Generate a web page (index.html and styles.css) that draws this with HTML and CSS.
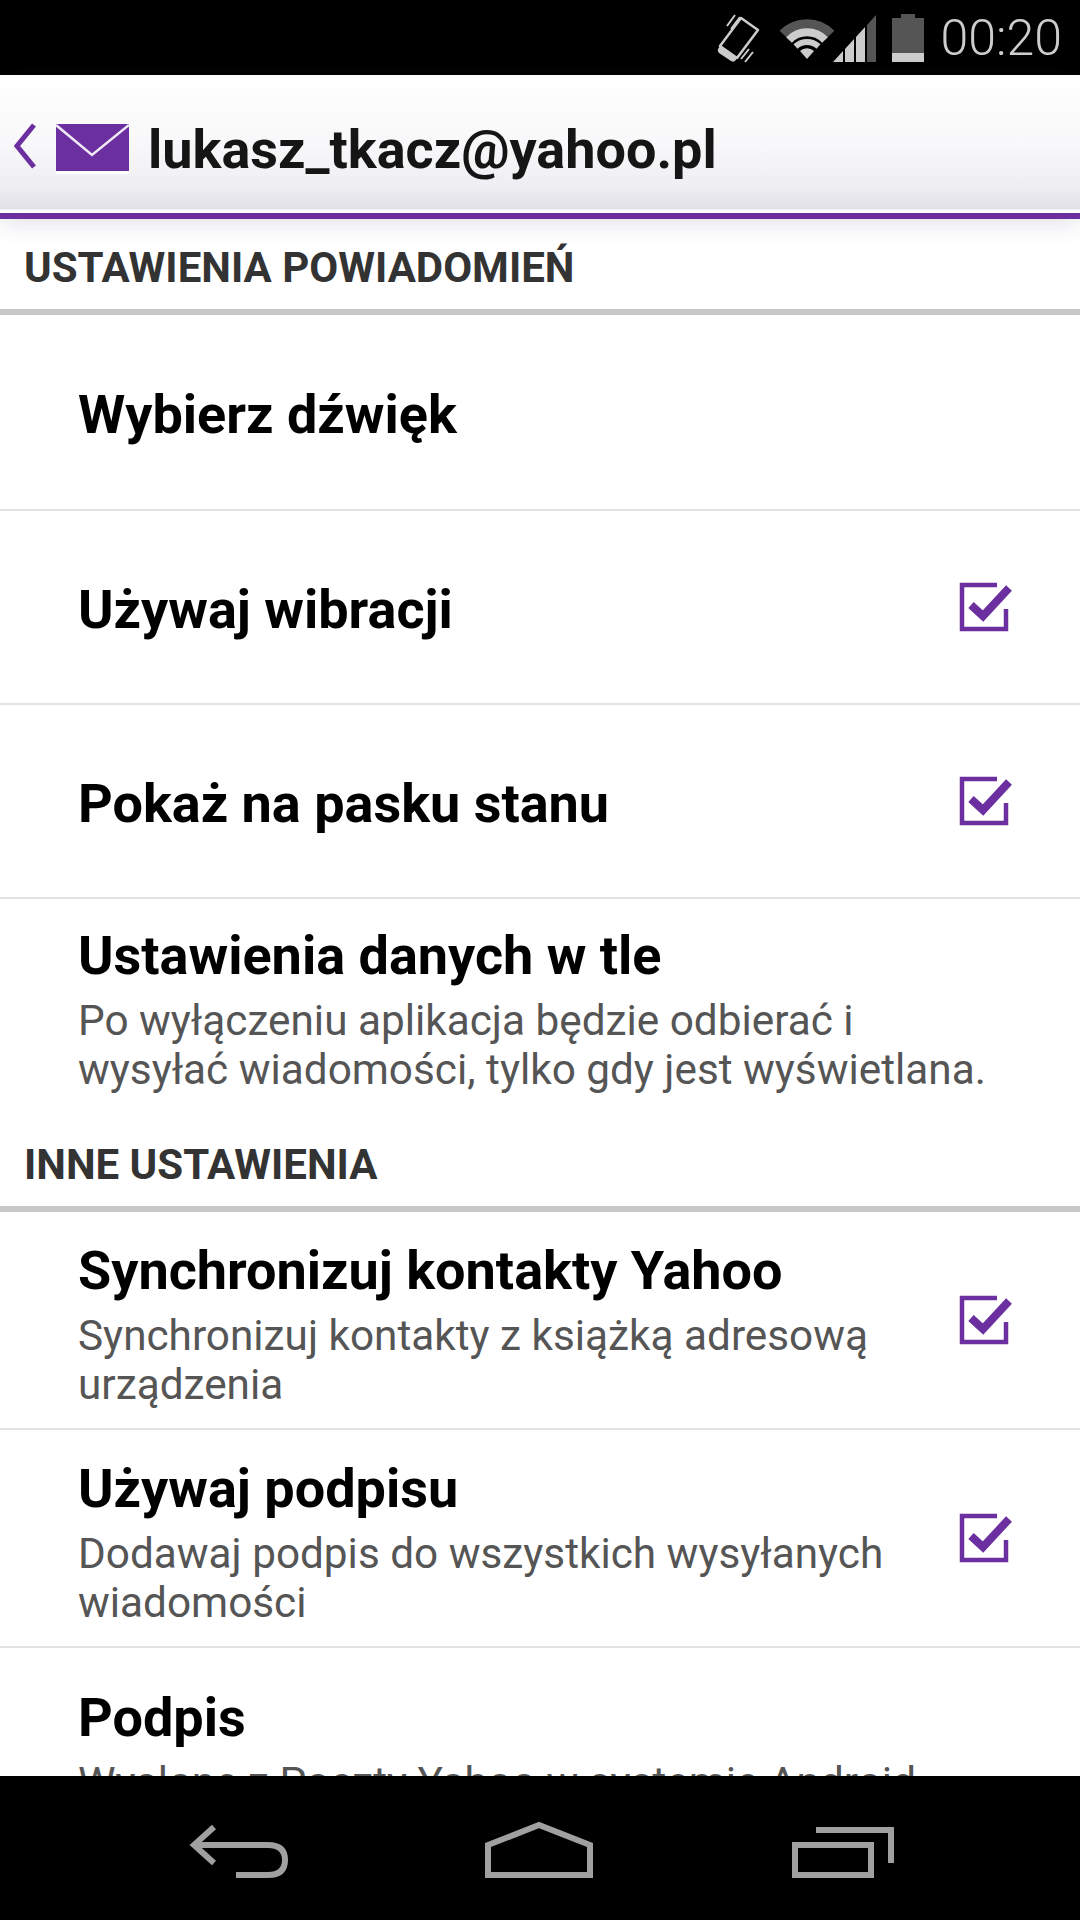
FILE: index.html
```html
<!DOCTYPE html>
<html lang="pl">
<head>
    <meta charset="utf-8">
    <meta name="viewport" content="width=device-width, initial-scale=1">
    <title>Ustawienia konta</title>
    <link rel="stylesheet" href="styles.css">
</head>
<body>
    <div class="screen">
        <div class="status-bar">
            <svg class="icon-vibrate" width="46" height="52" viewBox="0 0 46 52">
                <path d="M26 6 L43 18 L22 46 L5 34 Z" fill="none" stroke="#ccc" stroke-width="2.5" stroke-linejoin="round"/>
                <path d="M5 34 L22 46 L20 49 Q18 50 16 49 L4 41 Q2 39 3 37 Z" fill="#ccc"/>
                <path d="M12 14 L20 3 M16 17 L25 5 M26 47 L34 37 M30 50 L38 40" stroke="#ccc" stroke-width="2" fill="none"/>
            </svg>
            <svg class="icon-wifi" width="60" height="46" viewBox="0 0 60 46">
                <path d="M6.5 19.5 A33 33 0 0 1 53.500 19.5" fill="none" stroke="#555" stroke-width="11"/>
                <path d="M12 25 A25 25 0 0 1 48 25" fill="none" stroke="#ccc" stroke-width="8"/>
                <path d="M18.500 31.500 A17 17 0 0 1 41.500 31.500" fill="none" stroke="#ccc" stroke-width="6"/>
                <path d="M30 44 L23 36 A10 10 0 0 1 37 36 Z" fill="#ccc"/>
            </svg>
            <svg class="icon-signal" width="44" height="48" viewBox="0 0 44 48">
                <path d="M0 48 L10 37 V48 Z M12 35 L21 25 V48 H12 Z M23 23 L32 13 V48 H23 Z" fill="#ccc"/>
                <path d="M34 11 L43 1 V48 H34 Z" fill="#555"/>
            </svg>
            <svg class="icon-battery" width="32" height="48" viewBox="0 0 32 48">
                <path d="M9 0 H23 V4 H32 V39 H0 V4 H9 Z" fill="#555"/>
                <rect x="0" y="39" width="32" height="9" fill="#ccc"/>
            </svg>
            <span class="clock">00:20</span>
        </div>

        <header class="app-bar">
            <svg class="icon-back" width="24" height="46" viewBox="0 0 24 46">
                <path d="M21 2 L4 23 L21 44" fill="none" stroke="#6b2fa0" stroke-width="5"/>
            </svg>
            <svg class="icon-mail" width="73" height="50" viewBox="0 0 73 50">
                <rect x="0" y="0" width="73" height="47" fill="#6b2fa0"/>
                <rect x="0" y="47" width="73" height="3" fill="#fff"/>
                <path d="M0 1 L36 31 L73 1" fill="none" stroke="#f1eaf6" stroke-width="2.5"/>
            </svg>
            <h1 class="app-title">lukasz_tkacz@yahoo.pl</h1>
        </header>

        <main class="content">
            <h2 class="section-title section-first">USTAWIENIA POWIADOMIEŃ</h2>

            <div class="row row-plain row-first">
                <div class="row-text"><div class="row-title">Wybierz dźwięk</div></div>
            </div>
            <div class="row row-plain">
                <div class="row-text"><div class="row-title">Używaj wibracji</div></div>
                <svg class="check" width="60" height="60" viewBox="25 17 60 60"><use href="#check-mark"/></svg>
            </div>
            <div class="row row-plain">
                <div class="row-text"><div class="row-title">Pokaż na pasku stanu</div></div>
                <svg class="check" width="60" height="60" viewBox="25 17 60 60"><use href="#check-mark"/></svg>
            </div>
            <div class="row row-background">
                <div class="row-text">
                    <div class="row-title">Ustawienia danych w tle</div>
                    <div class="row-desc">Po wyłączeniu aplikacja będzie odbierać i<br>wysyłać wiadomości, tylko gdy jest wyświetlana.</div>
                </div>
            </div>

            <h2 class="section-title">INNE USTAWIENIA</h2>

            <div class="row">
                <div class="row-text">
                    <div class="row-title">Synchronizuj kontakty Yahoo</div>
                    <div class="row-desc">Synchronizuj kontakty z książką adresową<br>urządzenia</div>
                </div>
                <svg class="check" width="60" height="60" viewBox="25 17 60 60"><use href="#check-mark"/></svg>
            </div>
            <div class="row">
                <div class="row-text">
                    <div class="row-title">Używaj podpisu</div>
                    <div class="row-desc">Dodawaj podpis do wszystkich wysyłanych<br>wiadomości</div>
                </div>
                <svg class="check" width="60" height="60" viewBox="25 17 60 60"><use href="#check-mark"/></svg>
            </div>
            <div class="row row-signature">
                <div class="row-text">
                    <div class="row-title">Podpis</div>
                    <div class="row-desc">Wysłane z Poczty Yahoo w systemie Android</div>
                </div>
            </div>
        </main>

        <nav class="nav-bar">
            <svg width="102" height="60" viewBox="188 1820 102 60">
                <path d="M214 1827 L194 1845 L214 1863" fill="none" stroke="#a0a0a0" stroke-width="6"/>
                <path d="M194 1845 H268 Q285 1845 285 1860 Q285 1875 268 1875 H236" fill="none" stroke="#a0a0a0" stroke-width="6"/>
            </svg>
            <svg width="112" height="60" viewBox="486 1820 112 60">
                <path d="M489 1845 L540 1825 L591 1845 V1875 H489 Z" fill="none" stroke="#a0a0a0" stroke-width="6"/>
            </svg>
            <svg width="102" height="60" viewBox="793 1820 102 60">
                <rect x="796" y="1845" width="76" height="30" fill="none" stroke="#a0a0a0" stroke-width="6"/>
                <path d="M817 1830 H892 V1863" fill="none" stroke="#a0a0a0" stroke-width="6"/>
            </svg>
        </nav>
    </div>

    <svg class="defs" width="0" height="0">
        <defs>
            <g id="check-mark">
                <path d="M67 25 H32 V69 H76 V49" fill="none" stroke="#6b2fa0" stroke-width="4.5"/>
                <path d="M41 45 L53 56 L79 28" fill="none" stroke="#6b2fa0" stroke-width="8"/>
            </g>
        </defs>
    </svg>
</body>
</html>
```

FILE: styles.css
```css
body {
    margin: 0;
    background: #fff;
    font-family: Roboto, sans-serif;
}
.screen {
    display: flex;
    flex-direction: column;
    width: 1080px;
    height: 1920px;
    overflow: hidden;
}
.defs {
    display: block;
    height: 0;
}

/* status bar */
.status-bar {
    display: flex;
    align-items: center;
    justify-content: flex-end;
    flex: none;
    height: 75px;
    padding-right: 18px;
    box-sizing: border-box;
    background: #000;
}
.icon-vibrate {
    margin-right: 16px;
}
.icon-wifi {
    margin-right: -4px;
}
.icon-signal {
    margin-right: 15px;
}
.clock {
    margin-left: 17px;
    color: #ccc;
    font-size: 50px;
    font-weight: 300;
}

/* app bar */
.app-bar {
    position: relative;
    z-index: 1;
    display: flex;
    align-items: center;
    flex: none;
    height: 144px;
    padding: 10px 0 0 13px;
    box-sizing: border-box;
    border-bottom: 6px solid #6b2fa0;
    background: linear-gradient(#fff 0, #f8f8fa 50%, #efeef2 80%, #e2e0e8 134px, #fff 135px);
    box-shadow: 0 4px 22px rgba(60, 40, 90, 0.15);
}
.icon-back {
    margin-bottom: 6px;
}
.icon-mail {
    margin-left: 19px;
}
.app-title {
    margin: 0 0 0 19px;
    color: #151515;
    font-size: 54px;
    font-weight: 700;
}

/* list */
.content {
    flex: 1;
    overflow: hidden;
}
.section-title {
    margin: 0;
    padding: 0 0 18px 24px;
    border-bottom: 6px solid #c8c8c8;
    color: #333;
    font-size: 42px;
    font-weight: 700;
    line-height: 47px;
}
.section-first {
    padding-top: 25px;
}
.row {
    display: flex;
    align-items: center;
    justify-content: space-between;
    height: 218px;
    padding: 0 65px 0 78px;
    box-sizing: border-box;
    border-bottom: 2px solid #e2e2e2;
}
.row-text {
    align-self: flex-start;
    padding-top: 28px;
}
.row-plain {
    height: 194px;
}
.row-first {
    height: 196px;
}
.row-plain .row-text {
    align-self: center;
    padding-top: 6px;
}
.row-background {
    height: 242px;
    border-bottom: none;
}
.row-background .row-text {
    padding-top: 26px;
}
.row-signature {
    height: 200px;
    border-bottom: none;
}
.row-signature .row-text {
    padding-top: 39px;
}
.row-title {
    color: #000;
    font-size: 54px;
    font-weight: 700;
    line-height: 62px;
}
.row-desc {
    margin-top: 9px;
    color: #555;
    font-size: 42.3px;
    line-height: 49px;
}

/* nav bar */
.nav-bar {
    display: flex;
    align-items: flex-start;
    justify-content: space-between;
    flex: none;
    height: 144px;
    padding: 44px 186px 0 188px;
    box-sizing: border-box;
    background: #000;
}
```
